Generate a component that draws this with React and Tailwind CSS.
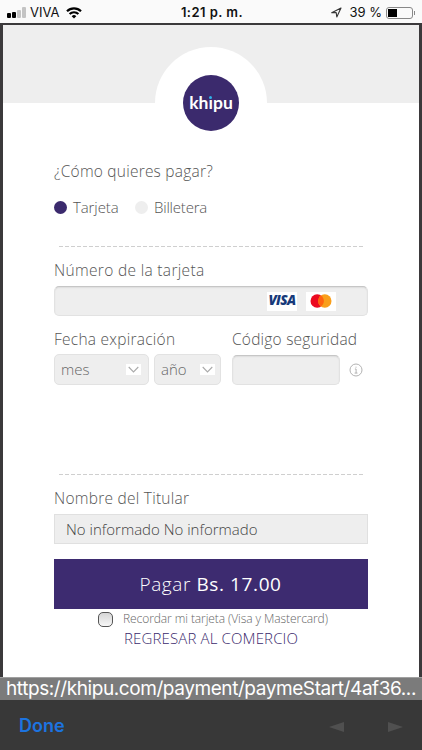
import { useState } from "react";

function StatusBar() {
  return (
    <div className="grid h-[23px] grid-cols-3 items-center bg-[#fafafa] pt-[2px] font-['Inter','Liberation_Sans',sans-serif] text-[13px] text-[#111]">
      <div className="flex items-center pl-[7px]">
        <div className="flex items-end gap-px">
          <span className="h-[5px] w-1 rounded-[1px] bg-black" />
          <span className="h-[6px] w-1 rounded-[1px] bg-black" />
          <span className="h-2 w-1 rounded-[1px] bg-[#c4c4c4]" />
          <span className="h-[11px] w-1 rounded-[1px] bg-[#c4c4c4]" />
        </div>
        <span className="ml-[4px]">VIVA</span>
        <svg className="ml-[6px]" width="16" height="12" viewBox="0 0 16 12" fill="none" stroke="#000" strokeWidth="2.2">
          <path d="M1 4.3a10 10 0 0 1 14 0" />
          <path d="M3.6 7.1a6.2 6.2 0 0 1 8.8 0" />
          <path d="M8 11.6 5.7 9.2a3.3 3.3 0 0 1 4.6 0z" fill="#000" stroke="none" />
        </svg>
      </div>
      <span className="pl-[2px] text-center text-[13px] font-semibold tracking-[0.45px] whitespace-nowrap">1:21 p. m.</span>
      <div className="flex items-center justify-end pr-[7px]">
        <svg width="11" height="11" viewBox="0 0 11 11" fill="none" stroke="#333" strokeWidth="1.1" strokeLinejoin="round">
          <path d="M10 1 .7 5.8l4.5-.2.6 4.4z" />
        </svg>
        <span className="ml-[7px] whitespace-nowrap">39 %</span>
        <span className="ml-[4px] flex h-[12px] w-[27px] rounded-[3px] border border-[#888] p-px">
          <span className="w-[9px] bg-black" />
        </span>
        <span className="ml-px h-1 w-px bg-[#888]" />
      </div>
    </div>
  );
}

function DashedLine() {
  return (
    <div className="ml-[5px] h-px w-[304px] bg-[repeating-linear-gradient(90deg,#cfcfcf_0_4px,transparent_4px_6px)]" />
  );
}

function Select({ label, className }) {
  return (
    <button
      type="button"
      className={`flex h-[31px] items-center justify-between rounded-[5px] border border-[#e2e2e2] bg-[#eee] pl-[6px] text-[15px] text-[#666] ${className}`}
    >
      <span className="pb-px">{label}</span>
      <span className="flex h-[11px] w-[15px] items-center justify-center bg-white">
        <svg width="11" height="7" viewBox="0 0 11 7" fill="none" stroke="#aaa" strokeWidth="1.1">
          <path d="m.7 1 4.8 5 4.8-5" />
        </svg>
      </span>
    </button>
  );
}

export default function App() {
  const [method, setMethod] = useState("Tarjeta");
  const [remember, setRemember] = useState(false);

  return (
    <div className="flex h-[750px] w-[422px] flex-col overflow-hidden bg-[#3b393b]">
      <StatusBar />

      <div className="mx-[3px] mt-[2px] h-[652px] bg-white font-['Open_Sans','Noto_Sans',sans-serif] font-light text-[#555]">
        <div className="flex h-[78px] justify-center bg-[#eee] pt-[22px]">
          <div className="flex h-[112px] w-[112px] shrink-0 items-center justify-center rounded-full bg-white">
            <div className="flex h-[56px] w-[56px] items-center justify-center rounded-full bg-[#3b2a6d]">
              <span className="relative font-['Lato',sans-serif] text-[17.5px] leading-none font-bold text-white">
                khıpu
                <span className="absolute top-[2px] left-[19.5px] h-[3px] w-[3px] rounded-full bg-[#2fb1e8]" />
              </span>
            </div>
          </div>
        </div>

        <form className="flex flex-col px-[51px] pt-[58px]" onSubmit={(e) => e.preventDefault()}>
          <p className="h-5 text-[15.5px] leading-5 tracking-[0.22px] whitespace-nowrap">¿Cómo quieres pagar?</p>

          <div className="mt-[16px] flex h-5 items-center text-[15px] leading-5 tracking-[-0.1px]">
            <button type="button" className="flex w-[81px] items-center gap-[6px]" onClick={() => setMethod("Tarjeta")}>
              <span className={`h-[13px] w-[13px] rounded-full ${method === "Tarjeta" ? "bg-[#3b2a6d]" : "bg-[#eee]"}`} />
              <span className="pb-px">Tarjeta</span>
            </button>
            <button type="button" className="flex items-center gap-[6px]" onClick={() => setMethod("Billetera")}>
              <span className={`h-[13px] w-[13px] rounded-full ${method === "Billetera" ? "bg-[#3b2a6d]" : "bg-[#eee]"}`} />
              <span className="pb-px tracking-[-0.2px]">Billetera</span>
            </button>
          </div>

          <div className="mt-[29px]">
            <DashedLine />
          </div>

          <p className="mt-[13px] h-5 text-[15.5px] leading-5 tracking-[0.32px] whitespace-nowrap">Número de la tarjeta</p>
          <div className="mt-[6px] flex h-[30px] w-[314px] items-center justify-end gap-[9px] rounded-[5px] border border-[#e2e2e2] border-t-[#c6c6c6] bg-[#eee] pr-[31px] shadow-[inset_0_1px_2px_-1px_#bbb]">
            <span className="flex h-[19px] w-[30px] items-center justify-center bg-white font-['Open_Sans',sans-serif] text-[13.5px] leading-none font-extrabold tracking-[-0.6px] text-[#173a7a] italic">
              VISA
            </span>
            <span className="flex h-[19px] w-[30px] items-center justify-center bg-white">
              <svg width="22" height="14" viewBox="0 0 22 14">
                <circle cx="7.2" cy="7" r="6.7" fill="#eb0a20" />
                <circle cx="14.8" cy="7" r="6.7" fill="#f99f1b" />
                <path d="M11 1.5a6.7 6.7 0 0 1 0 11 6.7 6.7 0 0 1 0-11z" fill="#ff6310" />
              </svg>
            </span>
          </div>

          <div className="mt-[13px] flex h-5 text-[15.5px] leading-5 whitespace-nowrap">
            <span className="w-[178px] tracking-[0.25px]">Fecha expiración</span>
            <span className="tracking-[0.22px]">Código seguridad</span>
          </div>
          <div className="mt-[5px] flex h-[31px] items-center">
            <Select label="mes" className="w-[95px] pr-[7px]" />
            <Select label="año" className="ml-[5px] w-[67px] pr-[5px]" />
            <span className="ml-[11px] h-[30px] w-[108px] rounded-[5px] border border-[#e2e2e2] border-t-[#c6c6c6] bg-[#eee] shadow-[inset_0_1px_2px_-1px_#bbb]" />
            <svg className="ml-[9px] shrink-0" width="14" height="14" viewBox="0 0 14 14" fill="none" stroke="#aaa">
              <circle cx="7" cy="7" r="6" strokeWidth=".9" />
              <path d="M5.9 6h1.2v4M5.6 10.1h2.9M7 3.7v1" strokeWidth=".9" />
            </svg>
          </div>

          <div className="mt-[89px]">
            <DashedLine />
          </div>

          <p className="mt-[13px] h-5 text-[15.5px] leading-5 tracking-[0.25px] whitespace-nowrap">Nombre del Titular</p>
          <div className="mt-[6px] flex h-[30px] w-[314px] items-center border border-[#e0e0e0] bg-[#eee] pl-[11px] text-[15px] text-[#444]">
            No informado No informado
          </div>

          <button type="submit" className="mt-[15px] h-[50px] w-[314px] bg-[#3d2b70] pr-px text-[19px] tracking-[0.6px] whitespace-nowrap text-white">
            Pagar <span className="font-normal">Bs. 17.00</span>
          </button>

          <div className="mt-[2px] ml-[44px] flex h-[17px] items-center">
            <button
              type="button"
              aria-label="Recordar mi tarjeta"
              aria-pressed={remember}
              onClick={() => setRemember(!remember)}
              className="h-[15px] w-[15px] rounded-[5px] border border-[#555] bg-linear-to-b from-[#d6d6d6] to-[#f7f7f7]"
            />
            <span className="ml-[10px] pb-[2px] text-[12px] tracking-[-0.08px] whitespace-nowrap text-[#666]">
              Recordar mi tarjeta (Visa y Mastercard)
            </span>
          </div>
          <a href="#" className="ml-[70px] h-5 text-[15px] leading-5 tracking-[0.14px] whitespace-nowrap text-[#3b2a6d]">
            REGRESAR AL COMERCIO
          </a>
        </form>
      </div>

      <div className="h-[23px] border-t border-[#a0a0a0] bg-[#7b7b7b] pl-[6px] font-['Inter',sans-serif] text-[19px] leading-[22px] tracking-[-0.42px] whitespace-nowrap text-white">
        https://khipu.com/payment/paymeStart/4af36...
      </div>
      <div className="flex h-[50px] items-center justify-between bg-[#383838] pr-[19px] pl-[19px]">
        <span className="font-['Inter',sans-serif] text-[18px] font-semibold text-[#1c74e0]">Done</span>
        <div className="flex gap-[44px] pt-[3px]">
          <svg width="15" height="10" viewBox="0 0 15 10" fill="#505050">
            <path d="M15 0v10L0 5z" />
          </svg>
          <svg width="15" height="10" viewBox="0 0 15 10" fill="#505050">
            <path d="M0 0v10l15-5z" />
          </svg>
        </div>
      </div>
    </div>
  );
}
